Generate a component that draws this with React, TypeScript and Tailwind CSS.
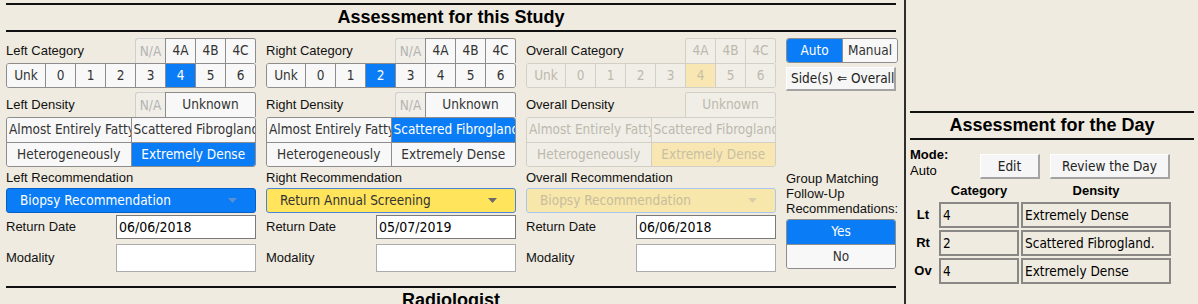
import React from 'react'

const tah = "font-['DejaVu_Sans_Condensed','DejaVu_Sans',sans-serif]"
const ari = "font-['Liberation_Sans',Arial,sans-serif]"

type St = 'n' | 'on' | 'yel' | 'na' | 'dis' | 'disOn'

const cellTone: Record<St, string> = {
  n: 'bg-[#f8f8f8] text-[#333]',
  on: 'bg-[#0a7cf6] text-white',
  yel: 'bg-[#ffe55c] text-[#333]',
  na: 'bg-[#f0eee7] text-[#b4b4b4]',
  dis: 'bg-[#f0eee6] text-[#bdb9ae]',
  disOn: 'bg-[#f8e7b2] text-[#c9c0a4]',
}

type C = { t: string; s?: St; w?: string }

function Cell({ c, first, dis }: { c: C; first: boolean; dis?: boolean }) {
  return (
    <div
      className={`${c.w ?? 'flex-1'} h-full overflow-hidden whitespace-nowrap text-center px-[2px] leading-[23px] ${cellTone[c.s ?? 'n']} ${
        first ? '' : dis ? 'border-l border-[#d2cfc6]' : 'border-l border-[#8d8d8d]'
      }`}
    >
      {c.t}
    </div>
  )
}

function Row({ cells, dis, cls }: { cells: C[]; dis?: boolean; cls: string }) {
  return (
    <div className={`flex h-[25px] shrink-0 border ${dis ? 'border-[#d2cfc6]' : 'border-[#8d8d8d]'} ${cls} overflow-hidden ${tah} text-[13.5px]`}>
      {cells.map((c, i) => (
        <Cell key={i} c={c} first={i === 0} dis={dis} />
      ))}
    </div>
  )
}

function Caret({ color }: { color: string }) {
  return (
    <svg width="9" height="5" viewBox="0 0 9 5">
      <path d="M0 0 L9 0 L4.5 5 Z" fill={color} />
    </svg>
  )
}

function Column({
  side,
  cat,
  na,
  dens,
  rec,
  date,
}: {
  side: string
  cat: number | null
  na: boolean
  dens: [St, St, St, St]
  rec: 'blue' | 'yellow' | 'dis'
  date: string
}) {
  const dis = !na
  const main: C[] = ['Unk', '0', '1', '2', '3', '4', '5', '6'].map((t, i) => ({
    t,
    w: i === 0 ? 'flex-1' : 'w-[30px]',
    s: dis ? (i - 1 === cat ? 'disOn' : 'dis') : i - 1 === cat ? 'on' : 'n',
  }))
  const recCls =
    rec === 'blue'
      ? 'bg-[#0a7cf6] border-[#0a5fc4] text-white'
      : rec === 'yellow'
      ? 'bg-[#ffe45c] border-[#4a84d8] text-[#333]'
      : 'bg-[#f8e7ab] border-[#a9c7ee] text-[#c8bd9c]'
  return (
    <div className="w-[250px] flex flex-col [&>*]:shrink-0">
      <div className="h-[25px] flex items-center justify-between">
        <span className="text-[13px] text-[#111]">{side} Category</span>
        {na ? (
          <div className={`flex h-[25px] ${tah} text-[13.5px]`}>
            <div className="w-[30px] border-t border-l border-[#cfcfcf] rounded-tl-[3px] bg-[#f0eee7] text-[#b4b4b4] text-center leading-[24px]">N/A</div>
            <Row cls="w-[91px] border-b-0 rounded-tr-[3px]" cells={[{ t: '4A' }, { t: '4B' }, { t: '4C' }]} />
          </div>
        ) : (
          <Row dis cls="w-[91px] border-b-0 rounded-t-[3px]" cells={[{ t: '4A', s: 'dis' }, { t: '4B', s: 'dis' }, { t: '4C', s: 'dis' }]} />
        )}
      </div>
      <Row dis={dis} cls="rounded-[3px]" cells={main} />

      <div className="mt-[4px] h-[25px] flex items-center justify-between">
        <span className="text-[13px] text-[#111]">{side} Density</span>
        {na ? (
          <div className={`flex h-[25px] ${tah} text-[13.5px]`}>
            <div className="w-[30px] border-t border-l border-[#cfcfcf] rounded-tl-[3px] bg-[#f0eee7] text-[#b4b4b4] text-center leading-[24px]">N/A</div>
            <Row cls="w-[91px] border-b-0 rounded-tr-[3px]" cells={[{ t: 'Unknown' }]} />
          </div>
        ) : (
          <Row dis cls="w-[91px] border-b-0 rounded-t-[3px]" cells={[{ t: 'Unknown', s: 'dis' }]} />
        )}
      </div>
      <div className={`border ${dis ? 'border-[#d2cfc6]' : 'border-[#8d8d8d]'} rounded-[3px] overflow-hidden`}>
        <div className={`flex h-[24px] ${tah} text-[13.5px]`}>
          <Cell dis={dis} first c={{ t: 'Almost Entirely Fatty', s: dens[0] }} />
          <Cell dis={dis} first={false} c={{ t: 'Scattered Fibroglandular', s: dens[1] }} />
        </div>
        <div className={`flex h-[24px] border-t ${dis ? 'border-[#d2cfc6]' : 'border-[#8d8d8d]'} ${tah} text-[13.5px]`}>
          <Cell dis={dis} first c={{ t: 'Heterogeneously', s: dens[2] }} />
          <Cell dis={dis} first={false} c={{ t: 'Extremely Dense', s: dens[3] }} />
        </div>
      </div>

      <div className="h-[21px] flex items-center text-[13px] text-[#111]">{side} Recommendation</div>
      <div className={`h-[25px] border rounded-[3px] flex items-center justify-between pl-[13px] pr-[18px] ${recCls} ${tah} text-[13.5px]`}>
        <span>{rec === 'yellow' ? 'Return Annual Screening' : 'Biopsy Recommendation'}</span>
        <Caret color={rec === 'blue' ? '#5a8fd0' : rec === 'yellow' ? '#6b6b6b' : '#d8cfa8'} />
      </div>

      <div className="mt-[2px] h-[24px] flex items-center">
        <span className="w-[110px] text-[13px] text-[#111]">Return Date</span>
        <div className={`flex-1 h-full bg-white border border-[#7a7a7a] pl-[2px] leading-[22px] text-[14px] text-black ${tah}`}>{date}</div>
      </div>
      <div className="mt-[5px] h-[28px] flex items-center">
        <span className="w-[110px] text-[13px] text-[#111]">Modality</span>
        <div className="flex-1 h-full bg-white border border-[#ababab]" />
      </div>
    </div>
  )
}

const winBtn =
  'bg-[#f6f6f6] border-t border-l border-t-white border-l-white border-r-2 border-b-2 border-r-[#a3a3a3] border-b-[#a3a3a3] text-[#222]'

export default function App() {
  return (
    <div className={`w-[1198px] h-[304px] overflow-hidden bg-[#efebe0] flex ${ari}`}>
      {/* Assessment for this Study */}
      <div className="w-[904px] pl-[6px] pr-[8px] pt-[3px] flex flex-col [&>*]:shrink-0">
        <div className="h-[2px] bg-[#111]" />
        <div className="h-[25px] flex items-center justify-center text-[18px] font-bold text-black">Assessment for this Study</div>
        <div className="h-[2px] bg-[#111]" />

        <div className="pt-[6px] flex gap-[10px]">
          <Column side="Left" cat={4} na dens={['n', 'n', 'n', 'on']} rec="blue" date="06/06/2018" />
          <Column side="Right" cat={2} na dens={['n', 'on', 'n', 'n']} rec="yellow" date="05/07/2019" />
          <Column side="Overall" cat={4} na={false} dens={['dis', 'dis', 'dis', 'disOn']} rec="dis" date="06/06/2018" />

          <div className="w-[114px] flex flex-col [&>*]:shrink-0">
            <div className={`flex h-[25px] border border-[#8d8d8d] rounded-[3px] overflow-hidden ${tah} text-[13.5px]`}>
              <div className="w-[55px] bg-[#0a7cf6] text-white text-center leading-[23px]">Auto</div>
              <div className="flex-1 border-l border-[#8d8d8d] bg-[#f8f8f8] text-[#333] text-center leading-[23px]">Manual</div>
            </div>
            <div className={`mt-[4px] w-[110px] h-[24px] overflow-hidden whitespace-nowrap pl-[4px] leading-[21px] ${winBtn} ${tah} text-[13.5px]`}>
              Side(s) ⇐ Overall
            </div>
            <div className="mt-[80px] text-[13px] leading-[15px] text-[#111]">
              Group Matching
              <br />
              Follow-Up
              <br />
              Recommendations:
            </div>
            <div className={`mt-[3px] w-[110px] border border-[#8d8d8d] rounded-[3px] overflow-hidden ${tah} text-[13.5px]`}>
              <div className="h-[24px] bg-[#0a7cf6] text-white text-center leading-[23px]">Yes</div>
              <div className="h-[24px] border-t border-[#8d8d8d] bg-[#f8f8f8] text-[#333] text-center leading-[23px]">No</div>
            </div>
          </div>
        </div>

        <div className="mt-[14px] w-[890px] h-[2px] bg-[#111]" />
        <div className="h-[24px] flex justify-center text-[18px] font-bold text-black leading-[24px]">Radiologist</div>
      </div>

      <div className="w-[2px] bg-[#2e2e2e]" />

      {/* Assessment for the Day */}
      <div className="flex-1 pl-[4px] pr-[4px] pt-[111px] flex flex-col [&>*]:shrink-0">
        <div className="h-[2px] bg-[#111]" />
        <div className="h-[25px] flex items-center justify-center text-[18px] font-bold text-black">Assessment for the Day</div>
        <div className="h-[2px] bg-[#111]" />

        <div className="mt-[7px] flex items-start">
          <div className="w-[70px] text-[13px] leading-[16px] text-black">
            <div className="font-bold">Mode:</div>
            <div>Auto</div>
          </div>
          <div className={`mt-[7px] w-[60px] h-[25px] text-center leading-[22px] text-[13.5px] ${winBtn} ${tah}`}>Edit</div>
          <div className={`mt-[7px] ml-[10px] w-[120px] h-[25px] text-center leading-[22px] text-[13.5px] ${winBtn} ${tah}`}>Review the Day</div>
        </div>

        <div className="mt-[5px] flex text-[13px] font-bold text-black leading-[14px]">
          <div className="w-[29px]" />
          <div className="w-[80px] text-center">Category</div>
          <div className="ml-[2px] w-[150px] text-center">Density</div>
        </div>

        <div className="mt-[4px] flex flex-col gap-[2px]">
          {[
            { l: 'Lt', c: '4', d: 'Extremely Dense' },
            { l: 'Rt', c: '2', d: 'Scattered Fibrogland.' },
            { l: 'Ov', c: '4', d: 'Extremely Dense' },
          ].map((r) => (
            <div key={r.l} className="flex items-center h-[26px]">
              <div className="w-[26px] text-center text-[13px] font-bold text-black">{r.l}</div>
              <div className="w-[3px]" />
              <div className={`w-[80px] h-full border-2 border-[#8a8884] pl-[2px] leading-[22px] text-[13.5px] text-black ${tah}`}>{r.c}</div>
              <div className={`ml-[2px] w-[150px] h-full border-2 border-[#8a8884] pl-[2px] leading-[22px] text-[13.5px] text-black ${tah}`}>{r.d}</div>
            </div>
          ))}
        </div>
      </div>
    </div>
  )
}
